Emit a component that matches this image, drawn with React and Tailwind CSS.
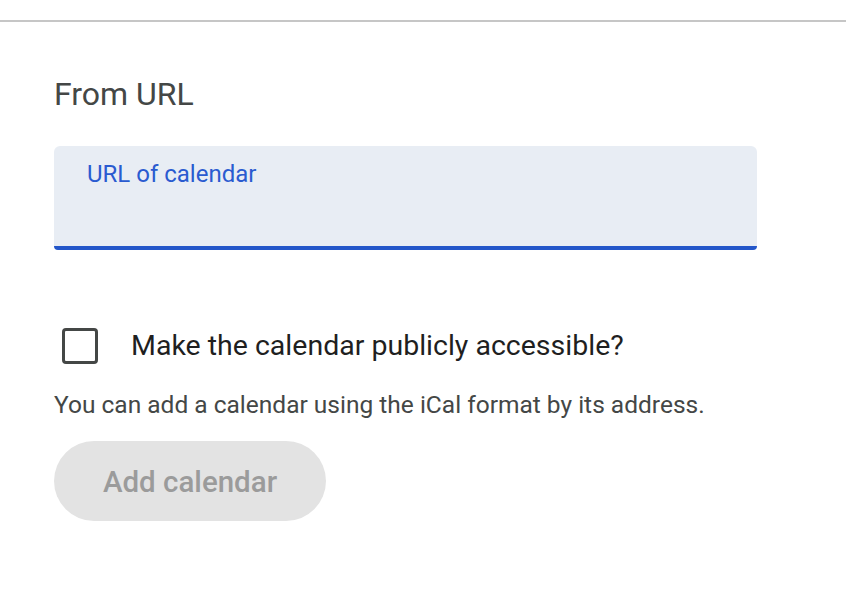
export default function App() {
  return (
    <div className="min-h-[594px] w-[846px] bg-white font-['Roboto',sans-serif]">
      <div className="h-5" />
      <div className="h-[2px] bg-[#c6c6c6]" />

      <div className="pl-[54px] pt-[52px]">
        <h2 className="text-[32px] leading-[40px] text-[#444746]">From URL</h2>

        {/* URL field */}
        <div className="mt-[32px] h-[104px] w-[703px] rounded-t-[6px] rounded-b-[4px] bg-[#e8edf4] border-b-4 border-[#2356c9] px-[33px] pt-[12px]">
          <span className="text-[24px] leading-[32px] text-[#2a5bd0]">URL of calendar</span>
        </div>

        {/* Checkbox */}
        <label className="mt-[78px] flex h-[36px] items-center">
          <span className="ml-[8px] h-[36px] w-[36px] shrink-0 rounded-[4px] border-[3px] border-[#444746]" />
          <span className="ml-[33px] text-[28.5px] leading-[36px] text-[#1f1f1f]">
            Make the calendar publicly accessible?
          </span>
        </label>

        <p className="mt-[25px] text-[24.5px] leading-[32px] text-[#444746]">
          You can add a calendar using the iCal format by its address.
        </p>

        <button className="mt-[20px] h-[80px] w-[272px] rounded-full bg-[#e3e3e3] pt-[2px] text-[29.5px] font-medium text-[#9b9b9b]">
          Add calendar
        </button>
      </div>
    </div>
  );
}
